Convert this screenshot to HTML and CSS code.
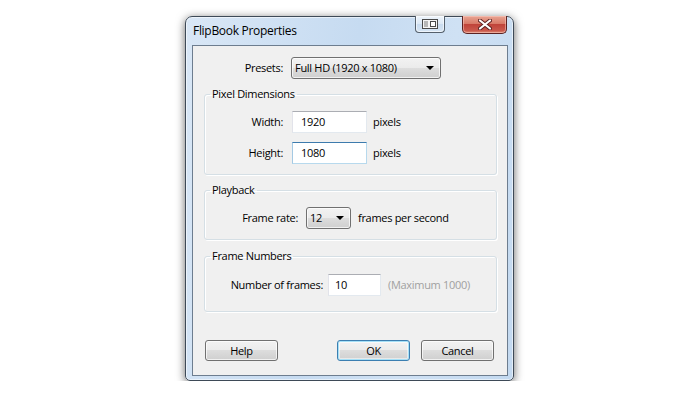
FILE: index.html
```html
<!DOCTYPE html>
<html lang="en">
<head>
    <meta charset="UTF-8">
    <title>FlipBook Properties</title>
    <link rel="stylesheet" href="styles.css">
</head>
<body>
    <main id="window">
        <header id="titlebar">
            <p id="title">FlipBook Properties</p>
            <button id="pin" class="capbut" type="button">
                <svg width="16" height="10" viewBox="0 0 16 10">
                    <rect x="0.5" y="0.5" width="15" height="9" fill="#f4f4f4" stroke="#4a4a4a"/>
                    <line x1="3" y1="2" x2="3" y2="8" stroke="#7a7a7a"/>
                    <line x1="5" y1="2" x2="5" y2="8" stroke="#7a7a7a"/>
                    <rect x="8.5" y="2.5" width="5" height="5" fill="#ffffff" stroke="#4a4a4a"/>
                </svg>
            </button>
            <button id="close" class="capbut" type="button">
                <svg width="14" height="11" viewBox="0 0 14 11">
                    <path d="M2 1.5 L12 9.5 M12 1.5 L2 9.5" stroke="#5a2020" stroke-width="4" stroke-linecap="round"/>
                    <path d="M2 1.5 L12 9.5 M12 1.5 L2 9.5" stroke="#ffffff" stroke-width="2.2" stroke-linecap="round"/>
                </svg>
            </button>
        </header>
        <section id="client">
            <div class="row" id="presetrow">
                <label class="lab" id="presetlab">Presets:</label>
                <div class="combo" id="presets">
                    <span class="val">Full HD (1920 x 1080)</span>
                    <span class="arrow"></span>
                </div>
            </div>

            <fieldset class="group" id="dims">
                <legend>Pixel Dimensions</legend>
                <div class="row">
                    <label class="lab dimlab">Width:</label>
                    <input class="box dimbox" type="text" value="1920">
                    <span class="unit">pixels</span>
                </div>
                <div class="row">
                    <label class="lab dimlab">Height:</label>
                    <input class="box dimbox focus" type="text" value="1080">
                    <span class="unit">pixels</span>
                </div>
            </fieldset>

            <fieldset class="group" id="playback">
                <legend>Playback</legend>
                <div class="row">
                    <label class="lab" id="ratelab">Frame rate:</label>
                    <div class="combo" id="rate">
                        <span class="val">12</span>
                        <span class="arrow"></span>
                    </div>
                    <span class="unit">frames per second</span>
                </div>
            </fieldset>

            <fieldset class="group" id="numbers">
                <legend>Frame Numbers</legend>
                <div class="row">
                    <label class="lab" id="numlab">Number of frames:</label>
                    <input class="box" id="numbox" type="text" value="10">
                    <span class="unit hint">(Maximum 1000)</span>
                </div>
            </fieldset>

            <footer id="buttons">
                <button class="but" type="button">Help</button>
                <div id="okcancel">
                    <button class="but default" type="button">OK</button>
                    <button class="but" type="button">Cancel</button>
                </div>
            </footer>
        </section>
    </main>
</body>
</html>
```

FILE: styles.css
```css
body{
    margin: 0;
    padding: 0;
    background: #ffffff;
    font-family: "Open Sans", "Noto Sans", sans-serif;
    font-size: 11px;
    letter-spacing: -0.3px;
    color: #000000;
}

#window{
    width: 329px;
    height: 365px;
    box-sizing: border-box;
    margin: 16px 0 0 185px;
    padding: 0 5px 4px 6px;
    border: 1px solid #3e4a57;
    border-radius: 7px 7px 5px 5px;
    background: linear-gradient(100deg, #d9e7f6 0%, #c6dbf1 45%, #cfe1f4 70%, #c3d9f0 100%);
    box-shadow: 0 2px 10px rgba(0, 0, 0, 0.6), inset 0 0 0 1px rgba(255, 255, 255, 0.55);
}

#titlebar{
    height: 28px;
    display: flex;
    align-items: flex-start;
}

#title{
    margin: 6px 0 0 1px;
    font-size: 12px;
    line-height: 16px;
    color: #000000;
    flex: 1;
}

.capbut{
    margin-top: -1px;
    border: 1px solid #55606c;
    border-top: 0;
    padding: 0;
    display: flex;
    align-items: center;
    justify-content: center;
}

#pin{
    width: 30px;
    height: 17px;
    margin-right: 17px;
    border-radius: 0 0 4px 4px;
    background: linear-gradient(#eef4fb, #dce8f5 50%, #c9dbef 51%, #d6e5f4);
    box-shadow: inset 0 0 0 1px rgba(255, 255, 255, 0.6);
}

#close{
    width: 45px;
    height: 18px;
    margin-right: 1px;
    border-color: #5b2222;
    border-radius: 0 0 5px 5px;
    background: linear-gradient(#e8a493, #d87a68 45%, #c0443a 50%, #c9584c 85%, #dc8a74);
    box-shadow: inset 0 0 0 1px rgba(255, 210, 200, 0.5);
}

#client{
    height: 331px;
    box-sizing: border-box;
    border: 1px solid #6d7d8f;
    background: #f0f0f0;
    padding-top: 11px;
}

.row{
    display: flex;
    align-items: center;
    height: 22px;
}

.lab, .unit{
    padding-bottom: 2px;
}

.lab{
    text-align: right;
    flex-shrink: 0;
}

#presetlab{
    width: 90px;
    margin-right: 8px;
}

.combo{
    height: 22px;
    box-sizing: border-box;
    border: 1px solid #707070;
    border-radius: 3px;
    background: linear-gradient(#f2f2f2, #ebebeb 49%, #dddddd 50%, #cfcfcf);
    box-shadow: inset 0 0 0 1px rgba(255, 255, 255, 0.7);
    display: flex;
    align-items: center;
    padding: 0 6px 1px 3px;
}

.combo .val{
    flex: 1;
}

.arrow{
    width: 0;
    height: 0;
    margin-top: 1px;
    border-left: 4px solid transparent;
    border-right: 4px solid transparent;
    border-top: 4px solid #000000;
}

#presets{
    width: 150px;
}

#rate{
    width: 45px;
}

.group{
    margin: 7px 10px 0 11px;
    padding: 9px 0 10px 0;
    border: 1px solid #d5dfe5;
    border-radius: 3px;
    box-shadow: 1px 1px 0 #ffffff, inset 1px 1px 0 #ffffff;
}

.group legend{
    margin-left: 5px;
    padding: 0 2px;
    line-height: 16px;
}

#dims .row + .row{
    margin-top: 9px;
}

.dimlab{
    width: 78px;
    margin-right: 9px;
}

.box{
    height: 22px;
    box-sizing: border-box;
    border: 1px solid #abadb3;
    border-right-color: #e3e9ef;
    border-bottom-color: #e3e9ef;
    border-left-color: #e2e3ea;
    border-top-color: #abadb3;
    background: #ffffff;
    font-family: "Open Sans", "Noto Sans", sans-serif;
    font-size: 11px;
    letter-spacing: -0.3px;
    color: #000000;
    padding: 0 0 2px 8px;
    margin: 0;
    outline: none;
}

.dimbox{
    width: 75px;
}

.box.focus{
    border-top-color: #3d7bad;
    border-bottom-color: #b7d9ed;
    border-left-color: #a4c9e3;
    border-right-color: #b7d9ed;
}

.unit{
    margin-left: 6px;
}

#ratelab{
    width: 93px;
    margin-right: 8px;
}

#rate + .unit{
    margin-left: 7px;
}

#numbers{
    margin-top: 8px;
    padding: 10px 0 15px 0;
}

#numlab{
    width: 118px;
    margin-right: 5px;
}

#numbox{
    width: 53px;
    padding-left: 6px;
}

.hint{
    margin-left: 7px;
    color: #a0a0a0;
}

#buttons{
    margin: 28px 13px 0 12px;
    display: flex;
    justify-content: space-between;
}

#okcancel{
    display: flex;
    gap: 11px;
}

.but{
    width: 73px;
    height: 21px;
    box-sizing: border-box;
    border: 1px solid #707070;
    border-radius: 3px;
    background: linear-gradient(#f2f2f2, #ebebeb 49%, #dddddd 50%, #cfcfcf);
    box-shadow: inset 0 0 0 1px rgba(255, 255, 255, 0.7);
    font-family: "Open Sans", "Noto Sans", sans-serif;
    font-size: 11px;
    letter-spacing: -0.3px;
    color: #000000;
    padding: 0;
}

.but.default{
    border-color: #3c7fb1;
    box-shadow: inset 0 0 0 1px #a6e0f7, inset 0 0 0 2px rgba(255, 255, 255, 0.5);
}
```
